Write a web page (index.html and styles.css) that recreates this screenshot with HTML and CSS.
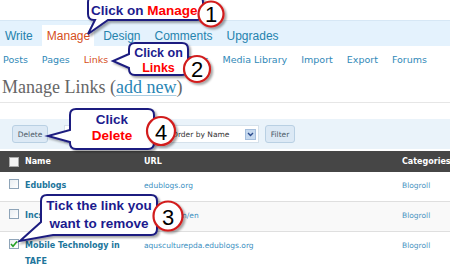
FILE: index.html
```html
<!DOCTYPE html>
<html lang="en">
<head>
    <meta charset="UTF-8">
    <meta name="viewport" content="width=device-width, initial-scale=1.0">
    <title>Manage Links</title>
    <link rel="stylesheet" href="styles.css">
</head>
<body>
    <div class="page">
        <div class="masthead"></div>
        <nav class="tabs">
            <a class="tab">Write</a>
            <a class="tab active">Manage</a>
            <a class="tab">Design</a>
            <a class="tab">Comments</a>
            <a class="tab">Upgrades</a>
        </nav>
        <nav class="subnav">
            <a>Posts</a>
            <a>Pages</a>
            <a class="current">Links</a>
            <a>Categories</a>
            <a>Tags</a>
            <a>Media Library</a>
            <a>Import</a>
            <a>Export</a>
            <a>Forums</a>
        </nav>
        <h2 class="title">Manage Links (<a>add new</a>)</h2>
        <div class="actions">
            <button class="btn btn-delete">Delete</button>
            <div class="select cat-select">
                <span>View all Categories</span>
                <i class="arrow"><svg width="7" height="5" viewBox="0 0 7 5"><path d="M1 1 L3.5 3.5 L6 1" /></svg></i>
            </div>
            <div class="select order-select">
                <span>Order by Name</span>
                <i class="arrow"><svg width="7" height="5" viewBox="0 0 7 5"><path d="M1 1 L3.5 3.5 L6 1" /></svg></i>
            </div>
            <button class="btn btn-filter">Filter</button>
        </div>
        <table class="links">
            <colgroup>
                <col class="c-check">
                <col class="c-name">
                <col class="c-url">
                <col class="c-cat">
            </colgroup>
            <thead>
                <tr>
                    <th class="check"><span class="box"></span></th>
                    <th>Name</th>
                    <th>URL</th>
                    <th>Categories</th>
                </tr>
            </thead>
            <tbody>
                <tr>
                    <td class="check"><span class="box"></span></td>
                    <td class="name"><a>Edublogs</a></td>
                    <td class="url"><a>edublogs.org</a></td>
                    <td class="cat"><a>Blogroll</a></td>
                </tr>
                <tr class="alt">
                    <td class="check"><span class="box"></span></td>
                    <td class="name"><a>Incsub</a></td>
                    <td class="url"><a>incsub.com/en</a></td>
                    <td class="cat"><a>Blogroll</a></td>
                </tr>
                <tr>
                    <td class="check"><span class="box checked"><svg width="8" height="8" viewBox="0 0 8 8"><path d="M1 4 L3 6.2 L7 1.5" /></svg></span></td>
                    <td class="name"><a>Mobile Technology in TAFE</a></td>
                    <td class="url"><a>aqusculturepda.edublogs.org</a></td>
                    <td class="cat"><a>Blogroll</a></td>
                </tr>
            </tbody>
        </table>

        <!-- tutorial callouts drawn over the screen -->
        <svg class="overlay" width="450" height="265" viewBox="0 0 450 265">
            <defs>
                <filter id="shadow" x="-20%" y="-30%" width="140%" height="170%">
                    <feDropShadow dx="2" dy="2" stdDeviation="1.2" flood-color="#000" flood-opacity="0.35" />
                </filter>
            </defs>

            <g class="callout" filter="url(#shadow)">
                <path d="M94 -4 H197 Q203 -4 203 2 V14 Q203 20 197 20 H108 L88 34 L95 20 H94 Q88 20 88 14 V2 Q88 -4 94 -4 Z" />
            </g>
            <text class="note" x="91" y="15">Click on <tspan class="hl">Manage</tspan></text>
            <g class="badge" filter="url(#shadow)">
                <circle cx="211" cy="14" r="12.5" />
            </g>
            <text class="num" x="211" y="22">1</text>

            <g class="callout" filter="url(#shadow)">
                <path d="M135 43 H182 Q188 43 188 49 V69 Q188 75 182 75 H135 Q129 75 129 69 V68 L113 61 L129 54 V49 Q129 43 135 43 Z" />
            </g>
            <text class="note mid small" x="158.5" y="57">Click on</text>
            <text class="note mid small hl" x="158.5" y="72">Links</text>
            <g class="badge" filter="url(#shadow)">
                <circle cx="197" cy="69" r="13" />
            </g>
            <text class="num" x="197" y="77">2</text>

            <g class="callout" filter="url(#shadow)">
                <path d="M76 109 H148 Q154 109 154 115 V143 Q154 149 148 149 H76 Q70 149 70 143 V142 L48 136 L70 130 V115 Q70 109 76 109 Z" />
            </g>
            <text class="note mid" x="112" y="124">Click</text>
            <text class="note mid hl" x="112" y="140">Delete</text>
            <g class="badge" filter="url(#shadow)">
                <circle cx="161" cy="131" r="14" />
            </g>
            <text class="num" x="161" y="139.5">4</text>

            <g class="callout" filter="url(#shadow)">
                <path d="M47 195 H151 Q157 195 157 201 V229 Q157 235 151 235 H53 L20 241 L41 222 V201 Q41 195 47 195 Z" />
            </g>
            <text class="note mid" x="99" y="210">Tick the link you</text>
            <text class="note mid" x="99" y="228">want to remove</text>
            <g class="badge" filter="url(#shadow)">
                <circle cx="168" cy="216" r="14.5" />
            </g>
            <text class="num" x="168" y="224.5">3</text>
        </svg>
    </div>
</body>
</html>
```

FILE: styles.css
```css
body, html {
    margin: 0;
    padding: 0;
    background: #fff;
    font-family: "DejaVu Sans", Verdana, sans-serif;
}
.page {
    position: relative;
    width: 450px;
    height: 265px;
    overflow: hidden;
}
.masthead {
    height: 20px;
}
.tabs {
    display: flex;
    align-items: flex-end;
    gap: 4px;
    height: 26px;
    box-sizing: border-box;
    padding-top: 5px;
    background-color: #e4f2fd;
    border-top: 1px solid #d6e7f5;
}
.tab {
    height: 21px;
    box-sizing: border-box;
    padding: 3px 5px 0;
    line-height: 17px;
    font-family: "Liberation Sans", Arial, sans-serif;
    font-size: 12px;
    color: #2583ad;
}
.tab.active {
    background-color: #fff;
    color: #d54e21;
    padding-right: 4px;
}
.subnav {
    display: flex;
    gap: 14px;
    height: 26px;
    line-height: 27px;
    padding-left: 3px;
    font-size: 9.5px;
    color: #3189b8;
    white-space: nowrap;
}
.subnav .current {
    color: #d54e21;
}
.title {
    margin: 0 0 16px;
    padding: 4px 0 4px 2px;
    line-height: 22px;
    font-family: "Liberation Serif", Georgia, serif;
    font-size: 18px;
    font-weight: normal;
    color: #666;
    border-bottom: 1px solid #e6e6e6;
}
.title a {
    color: #2a86b5;
    text-decoration: underline;
    text-decoration-color: #a9cde2;
    text-underline-offset: 2px;
}
.actions {
    display: flex;
    align-items: center;
    gap: 5px;
    height: 30px;
    padding-left: 12px;
    background-color: #eaf3fa;
}
.btn {
    height: 18px;
    padding: 0;
    border: 1px solid #b9d0e3;
    border-radius: 3px;
    background-color: #dce9f5;
    font-family: "DejaVu Sans", Verdana, sans-serif;
    font-size: 7.5px;
    color: #4b5966;
}
.btn-delete {
    width: 36px;
    margin-right: 11px;
}
.btn-filter {
    width: 30px;
    margin-left: 1px;
}
.select {
    display: flex;
    align-items: center;
    justify-content: space-between;
    height: 18px;
    box-sizing: border-box;
    padding: 0 2px 0 5px;
    background-color: #fff;
    border: 1px solid #d5e1eb;
    font-size: 7.5px;
    color: #333;
}
.cat-select {
    width: 97px;
}
.order-select {
    width: 93px;
}
.arrow {
    display: flex;
    align-items: center;
    justify-content: center;
    width: 11px;
    height: 11px;
    box-sizing: border-box;
    background-color: #c6d9ef;
    border: 1px solid #a4bedd;
}
.arrow path {
    fill: none;
    stroke: #2b4a8a;
    stroke-width: 1.4;
}
.links {
    width: 450px;
    margin-top: 2px;
    table-layout: fixed;
    border-collapse: collapse;
}
.c-check { width: 22px; }
.c-name { width: 119px; }
.c-url { width: 258px; }
.c-cat { width: 51px; }
.links th {
    height: 21px;
    padding: 0 0 0 3px;
    background-color: #464646;
    color: #fff;
    font-size: 8px;
    font-weight: bold;
    text-align: left;
    white-space: nowrap;
}
.links th.check,
.links td.check {
    padding-left: 9px;
}
.links td {
    height: 24px;
    padding: 5px 0 0 3px;
    vertical-align: top;
    line-height: 12.5px;
    border-bottom: 1px solid #dfdfdf;
}
.links tr.alt td {
    background-color: #f9f9f9;
}
.box {
    display: block;
    width: 8px;
    height: 8px;
    border: 1px solid #8ea4b8;
    background: linear-gradient(to bottom right, #e9eef2, #fff);
}
th .box {
    border-color: #aaa;
    background: #f4f4f4;
}
td .box {
    margin-top: 2px;
}
.box svg {
    display: block;
}
.box.checked path {
    fill: none;
    stroke: #22a022;
    stroke-width: 1.6;
}
.name a {
    font-size: 8px;
    font-weight: bold;
    color: #21759b;
}
.url a {
    font-size: 7.5px;
    color: #3b8fbf;
    white-space: nowrap;
}
.cat a {
    font-size: 7.5px;
    color: #4a95c2;
}
.overlay {
    position: absolute;
    top: 0;
    left: 0;
}
.callout path {
    fill: #fff;
    stroke: #1f1f80;
    stroke-width: 2;
}
.note {
    font-family: "Liberation Sans", Arial, sans-serif;
    font-size: 13.5px;
    font-weight: bold;
    fill: #1b1b8e;
}
.note.small {
    font-size: 12.5px;
}
.note.mid {
    text-anchor: middle;
}
.hl {
    fill: #f00;
}
.badge circle {
    fill: #fff;
    stroke: #d21c1c;
    stroke-width: 2.2;
}
.num {
    font-family: "Liberation Sans", Arial, sans-serif;
    font-size: 22px;
    fill: #000;
    text-anchor: middle;
}
```
